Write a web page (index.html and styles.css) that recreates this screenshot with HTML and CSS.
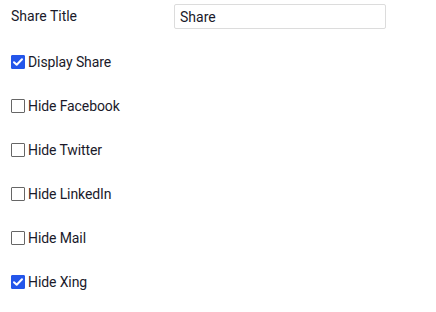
FILE: index.html
```html
<!DOCTYPE html>
<html>
<head>
<meta charset="utf-8">
<link rel="stylesheet" href="styles.css">
</head>
<body>
<div class="form">
  <div class="field">
    <label class="field-label" for="share-title">Share Title</label>
    <input class="text-input" id="share-title" type="text" value="Share">
  </div>
  <div class="checks">
    <label class="check-row"><input class="native" type="checkbox" checked><span class="box checked"><svg viewBox="0 0 14 14" width="14" height="14"><path d="M3 7.2 L5.7 9.8 L11 4.2" fill="none" stroke="#fff" stroke-width="2" stroke-linecap="round" stroke-linejoin="round"/></svg></span><span>Display Share</span></label>
    <label class="check-row"><input class="native" type="checkbox"><span class="box"></span><span>Hide Facebook</span></label>
    <label class="check-row"><input class="native" type="checkbox"><span class="box"></span><span>Hide Twitter</span></label>
    <label class="check-row"><input class="native" type="checkbox"><span class="box"></span><span>Hide LinkedIn</span></label>
    <label class="check-row"><input class="native" type="checkbox"><span class="box"></span><span>Hide Mail</span></label>
    <label class="check-row"><input class="native" type="checkbox" checked><span class="box checked"><svg viewBox="0 0 14 14" width="14" height="14"><path d="M3 7.2 L5.7 9.8 L11 4.2" fill="none" stroke="#fff" stroke-width="2" stroke-linecap="round" stroke-linejoin="round"/></svg></span><span>Hide Xing</span></label>
  </div>
</div>
</body>
</html>
```
FILE: styles.css
```css
html, body {
  margin: 0;
  background: #fff;
}
body {
  font-family: Roboto, "Liberation Sans", sans-serif;
  font-size: 14px;
  color: #1a1a2a;
}
.form {
  padding: 4px 0 0 11px;
}
.field {
  display: grid;
  grid-template-columns: 163px 212px;
  align-items: center;
}
.field-label {
  line-height: 25px;
}
.text-input {
  box-sizing: border-box;
  width: 212px;
  height: 25px;
  margin: 0;
  padding: 0 5px;
  border: 1px solid #dcdcdc;
  border-radius: 2px;
  font: inherit;
  color: inherit;
  outline: none;
}
.checks {
  margin-top: 11px;
  display: flex;
  flex-direction: column;
}
.check-row {
  height: 44px;
  display: flex;
  align-items: center;
  letter-spacing: -0.1px;
}
.native {
  position: absolute;
  opacity: 0;
  width: 1px;
  height: 1px;
  margin: 0;
}
.box {
  box-sizing: border-box;
  width: 14px;
  height: 14px;
  margin-right: 3px;
  border: 1px solid #666;
  border-radius: 1px;
  display: flex;
  flex: none;
}
.box.checked {
  background: #2456ea;
  border-color: #2456ea;
}
.box svg {
  margin: -1px;
}
```
